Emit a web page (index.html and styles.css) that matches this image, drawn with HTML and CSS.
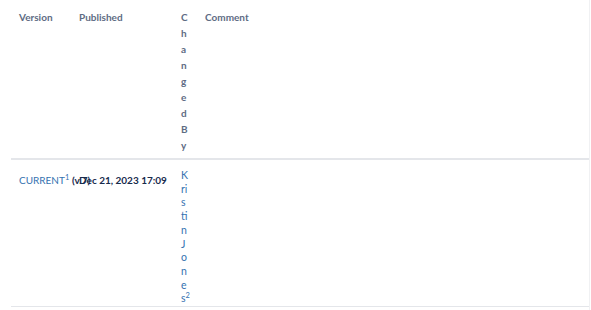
FILE: index.html
```html
<!DOCTYPE html>
<html lang="en">
<head>
<meta charset="utf-8">
<title>Page history</title>
<link rel="stylesheet" href="styles.css">
</head>
<body>
<div class="page">
  <table class="history">
    <colgroup>
      <col class="c-version">
      <col class="c-published">
      <col class="c-author">
      <col class="c-comment">
    </colgroup>
    <thead>
      <tr>
        <th>Version</th>
        <th>Published</th>
        <th class="author">Changed By</th>
        <th>Comment</th>
      </tr>
    </thead>
    <tbody>
      <tr>
        <td class="version"><a href="#" class="link current">CURRENT<sup>1</sup></a> <strong>(v.7)</strong></td>
        <td class="published"><strong>Dec 21, 2023 17:09</strong></td>
        <td class="author"><a href="#" class="link">Kristin Jone<span class="keep">s<sup>2</sup></span></a></td>
        <td class="comment"></td>
      </tr>
    </tbody>
  </table>
</div>
</body>
</html>
```

FILE: styles.css
```css
html, body {
  margin: 0;
  padding: 0;
  background: #ffffff;
}

body {
  font-family: "Lato", "Open Sans", "Liberation Sans", sans-serif;
  font-size: 10.5px;
  color: #172b4d;
}

.page {
  width: 589px;
  min-height: 310px;
  border-right: 1px solid #f0f1f3;
}

.history {
  margin-left: 11px;
  width: 578px;
  border-collapse: collapse;
  table-layout: fixed;
}

.c-version { width: 60px; }
.c-published { width: 102px; }
.c-author { width: 24px; }

.history th {
  text-align: left;
  vertical-align: top;
  font-size: 10px;
  font-weight: 700;
  color: #5e6c84;
  line-height: 16px;
  padding: 9px 8px 5px;
  border-bottom: 2px solid #e4e6ea;
}

.history td {
  vertical-align: top;
  line-height: 13.7px;
  padding: 9px 8px 0;
  border-bottom: 1px solid #e4e6ea;
}

.history td.version,
.history td.published {
  padding-top: 14px;
}

.author {
  word-break: break-all;
  overflow-wrap: anywhere;
}

.keep {
  white-space: nowrap;
}

.version {
  white-space: nowrap;
  overflow: visible;
}

.published {
  white-space: nowrap;
}

.link {
  color: #3572b0;
  text-decoration: none;
}

.current {
  font-size: 10px;
}

sup {
  font-size: 7.5px;
  line-height: 0;
  vertical-align: super;
}

strong {
  font-size: 10px;
  font-weight: 700;
  color: #172b4d;
}
```
